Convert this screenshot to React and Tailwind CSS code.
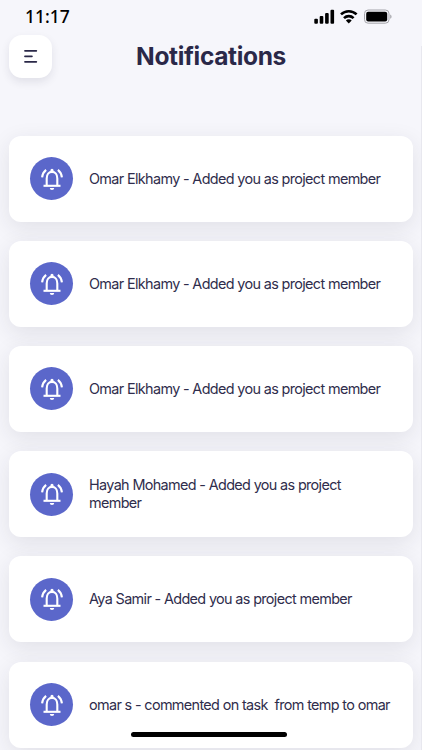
const notifications = [
  'Omar Elkhamy - Added you as project member',
  'Omar Elkhamy - Added you as project member',
  'Omar Elkhamy - Added you as project member',
  'Hayah Mohamed - Added you as project member',
  'Aya Samir - Added you as project member',
  'omar s - commented on task  from temp to omar',
]

function StatusBar() {
  return (
    <div className="flex h-[35px] items-start justify-between pl-[25px] pr-[30px] text-black">
      <span className="pt-[5px] font-['Noto_Sans',sans-serif] text-[17.5px] font-medium leading-[22px]">11:17</span>
      <svg width="78" height="16" viewBox="0 0 78 16" className="mt-[9px]">
        <rect x="0.3" y="9.7" width="3.6" height="5" rx="1" />
        <rect x="5.7" y="7" width="3.6" height="7.7" rx="1" />
        <rect x="11.1" y="4" width="3.6" height="10.7" rx="1" />
        <rect x="16.5" y="0.8" width="3.6" height="13.9" rx="1" />
        <g fill="none" stroke="#000" strokeWidth="2.6">
          <path d="M27 5.4a11.2 11.2 0 0 1 15.6 0" />
          <path d="M30 9.1a6.9 6.9 0 0 1 9.6 0" />
        </g>
        <path d="M31.9 11.5a4 4 0 0 1 5.8 0l-2.9 3z" />
        <rect x="50.5" y="1" width="24.5" height="13.2" rx="3.6" fill="none" stroke="#a5a5aa" />
        <rect x="52.2" y="2.7" width="21" height="9.8" rx="2" />
        <path d="M76.2 5.4c1.8.7 1.8 3.6 0 4.4z" fill="#a5a5aa" />
      </svg>
    </div>
  )
}

function Header() {
  return (
    <header className="grid grid-cols-[43px_1fr_43px] items-center px-[9px]">
      <button
        aria-label="Menu"
        className="grid h-[43px] w-[43px] place-items-center rounded-[13px] bg-white shadow-[0_4px_8px_rgba(40,40,70,0.10)]"
      >
        <svg width="15" height="15" viewBox="0 0 15 15" stroke="#2a2848" strokeWidth="1.8" strokeLinecap="round">
          <path d="M2 1.8h11.3M2 7.3h6.9M2 12.8h11.3" />
        </svg>
      </button>
      <h1 className="-mt-px text-center text-[24.5px] font-bold leading-[30px] tracking-[-0.35px] text-[#2a2848]">
        Notifications
      </h1>
    </header>
  )
}

function BellIcon() {
  return (
    <svg width="26" height="26" viewBox="0 0 26 26" fill="none" stroke="#fff" strokeWidth="2.1">
      <path d="M7.7 20v-7.6c0-3.7 2.2-6.5 5.3-6.5s5.3 2.8 5.3 6.5V20" />
      <path d="M4.5 19.8h17" />
      <path d="M3.1 11.4c.3-3 1.5-5.5 4-7.5M22.9 11.4c-.3-3-1.5-5.5-4-7.5" />
      <path d="M11.4 5.8V4.4a1.6 1.6 0 0 1 3.2 0v1.4zM10.8 22.1h4.4a2.2 2 0 0 1-4.4 0z" fill="#fff" stroke="none" />
    </svg>
  )
}

function NotificationCard({ text }) {
  return (
    <li className="relative flex h-[86px] shrink-0 items-center pl-[21px] pr-[22px]">
      <div className="grid h-[43px] w-[43px] shrink-0 place-items-center rounded-full bg-[#5b67ca]">
        <BellIcon />
      </div>
      <p className="ml-4 whitespace-pre-wrap text-[14.4px] leading-[18px] tracking-[-0.64px] text-[#2f2d4c]">
        {text}
      </p>
      <div className="absolute inset-0 -z-10 rounded-[12px] bg-white shadow-[0_6px_22px_rgba(40,40,55,0.10)]" />
    </li>
  )
}

export default function App() {
  return (
    <div className="relative isolate h-[750px] w-[422px] overflow-hidden bg-[#f6f6fb] font-['Inter',sans-serif]">
      <StatusBar />
      <Header />
      <ul className="mt-[57.6px] flex flex-col gap-[19.2px] px-[9px]">
        {notifications.map((text, i) => (
          <NotificationCard key={i} text={text} />
        ))}
      </ul>
      <div className="absolute bottom-0 right-0 top-[46px] w-px bg-[#e8e8ef]" />
      <div className="absolute bottom-[13px] left-[131px] h-[5px] w-[156px] rounded-full bg-black" />
    </div>
  )
}
